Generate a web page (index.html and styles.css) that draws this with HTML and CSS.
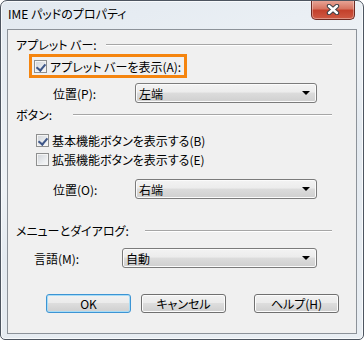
FILE: index.html
```html
<!DOCTYPE html>
<html lang="ja">
<head>
    <meta charset="UTF-8">
    <title>IME パッドのプロパティ</title>
    <link rel="stylesheet" href="styles.css">
</head>
<body>
    <div class="window">
        <div class="titlebar">
            <span class="title">IME パッドのプロパティ</span>
            <button class="close">
                <svg width="14" height="11" viewBox="0 0 14 11">
                    <path d="M3 2 L11 9 M11 2 L3 9" stroke="#3b3f46" stroke-width="4.4" stroke-linecap="round"/>
                    <path d="M3 2 L11 9 M11 2 L3 9" stroke="#fff" stroke-width="2.4" stroke-linecap="round"/>
                </svg>
            </button>
        </div>
        <div class="client">
            <div class="group-head head-applet"><span>アプレット バー:</span><i></i></div>
            <label class="check highlight"><span class="box checked"></span>アプレット バーを表示(A):</label>
            <div class="field field-pos1">
                <span class="field-label">位置(P):</span>
                <div class="combo">左端<span class="arrow"></span></div>
            </div>

            <div class="group-head head-buttons"><span>ボタン:</span><i></i></div>
            <label class="check check-first"><span class="box checked"></span>基本機能ボタンを表示する(B)</label>
            <label class="check check-second"><span class="box"></span>拡張機能ボタンを表示する(E)</label>
            <div class="field field-pos2">
                <span class="field-label">位置(O):</span>
                <div class="combo">右端<span class="arrow"></span></div>
            </div>

            <div class="group-head head-menu"><span>メニューとダイアログ:</span><i></i></div>
            <div class="field field-lang">
                <span class="field-label">言語(M):</span>
                <div class="combo">自動<span class="arrow"></span></div>
            </div>

            <div class="actions">
                <button class="btn btn-default">OK</button>
                <button class="btn">キャンセル</button>
                <button class="btn btn-help">ヘルプ(H)</button>
            </div>
        </div>
    </div>
</body>
</html>
```

FILE: styles.css
```css
* {
    box-sizing: border-box;
}
body {
    margin: 0;
    background-color: #fff;
    font-family: "Noto Sans CJK JP", "Liberation Sans", sans-serif;
    font-size: 12px;
    font-feature-settings: "palt";
    color: #000;
}
.window {
    width: 364px;
    height: 340px;
    border: 1px solid #4d5560;
    border-radius: 7px 7px 5px 5px;
    background: linear-gradient(160deg, #e2e9f0 0%, #eef2f6 40%, #e4eaf0 55%, #e9eef3 100%);
    box-shadow: inset 0 0 0 1px #f8fafc;
    overflow: hidden;
}
.titlebar {
    display: flex;
    height: 28px;
    padding-left: 7px;
}
.title {
    line-height: 26px;
    color: #000;
}
.close {
    margin: -1px 8px 0 auto;
    width: 44px;
    height: 20px;
    padding: 0;
    border: 1px solid #6e2a22;
    border-top: none;
    border-radius: 0 0 5px 5px;
    background: linear-gradient(#e9a99b 0%, #d77562 45%, #c4412c 55%, #cf5a44 100%);
    box-shadow: inset 0 0 0 1px rgba(255, 255, 255, 0.35);
    display: flex;
    align-items: center;
    justify-content: center;
}
.client {
    margin: 0 6px;
    height: 305px;
    border: 1px solid #8c9299;
    background-color: #f0f0f0;
    padding-top: 8px;
}
.group-head {
    display: flex;
    align-items: center;
    height: 14px;
    margin-left: 8px;
    margin-right: 24px;
    line-height: 14px;
}
.group-head span {
    white-space: nowrap;
}
.group-head i {
    flex: 1;
    height: 2px;
    border-top: 1px solid #a6a6a6;
    border-bottom: 1px solid #fff;
}
.head-applet span { width: 90px; }
.head-buttons { margin-top: 5px; }
.head-buttons span { width: 57px; }
.head-menu { margin-top: 25px; }
.head-menu span { width: 129px; }
.check {
    display: flex;
    align-items: center;
    height: 13px;
    line-height: 13px;
    white-space: nowrap;
}
.box {
    width: 13px;
    height: 13px;
    margin-right: 3px;
    border: 1px solid #8e8f8f;
    background: linear-gradient(135deg, #cfd3d8 0%, #eef0f2 70%, #f7f7f7 100%);
    box-shadow: inset 0 0 0 1px #f4f4f4;
    position: relative;
}
.box.checked::after {
    content: "";
    position: absolute;
    left: 3px;
    top: 1px;
    width: 4px;
    height: 7px;
    border-right: 2px solid #3f5788;
    border-bottom: 2px solid #3f5788;
    transform: rotate(40deg);
}
.highlight {
    margin: 2px 0 0 21px;
    width: 158px;
    height: 24px;
    padding-left: 2px;
    border: 3px solid #f5850f;
}
.check-first {
    margin: 12px 0 0 28px;
}
.check-second {
    margin: 6px 0 0 28px;
}
.field {
    display: flex;
    align-items: center;
    height: 20px;
}
.field-label {
    white-space: nowrap;
}
.field-pos1 { margin-top: 5px; padding-left: 45px; }
.field-pos2 { margin-top: 13px; padding-left: 45px; }
.field-lang { margin-top: 10px; padding-left: 26px; }
.field-pos1 .field-label,
.field-pos2 .field-label { width: 82px; }
.field-lang .field-label { width: 88px; }
.combo {
    display: flex;
    align-items: center;
    width: 182px;
    height: 20px;
    padding-left: 3px;
    border: 1px solid #7b7b7b;
    border-radius: 3px;
    background: linear-gradient(#f3f3f3 0%, #ececec 45%, #dcdcdc 50%, #cfcfcf 100%);
    box-shadow: inset 0 0 0 1px #fbfbfb;
}
.field-lang .combo { width: 195px; }
.arrow {
    margin-left: auto;
    margin-right: 6px;
    width: 0;
    height: 0;
    border-left: 4px solid transparent;
    border-right: 4px solid transparent;
    border-top: 4px solid #000;
}
.actions {
    display: flex;
    margin-top: 26px;
    padding-left: 38px;
}
.btn {
    width: 85px;
    height: 19px;
    margin-right: 10px;
    padding: 0;
    border: 1px solid #707070;
    border-radius: 3px;
    background: linear-gradient(#f2f2f2 0%, #ebebeb 45%, #dddddd 50%, #cfcfcf 100%);
    box-shadow: inset 0 0 0 1px #fcfcfc;
    font-family: inherit;
    font-size: 12px;
    font-feature-settings: "palt";
    line-height: 16px;
    color: #000;
}
.btn-default {
    border-color: #3c94d4;
    box-shadow: inset 0 0 0 1px #a8dcf6;
}
.btn-help {
    margin-left: 18px;
}
```
